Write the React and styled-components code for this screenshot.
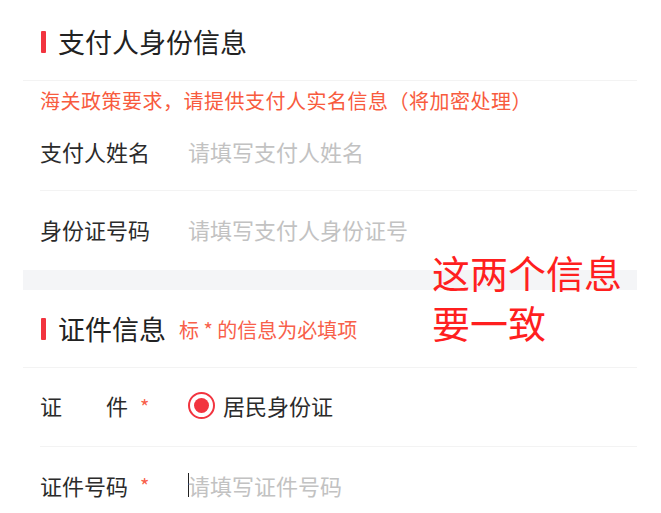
import React from 'react';
import styled, { createGlobalStyle } from 'styled-components';

const GlobalStyle = createGlobalStyle`
    html, body {
        margin:0;
        padding:0;
        background:#ffffff;
    }
    body {
        font-family:"Noto Sans CJK SC", "Noto Sans", sans-serif;
    }
`

const Page = styled.div`
    position:relative;
    width:614px;
    padding:3px 0 0 23px;
    background:#fff;
`

const SectionHeader = styled.div`
    height:77px;
    display:flex;
    align-items:center;
    padding-left:18px;
    border-bottom:1px solid #f3f3f3;
`

const Bar = styled.span`
    width:5px;
    height:22px;
    border-radius:1px;
    background:#f2343f;
    margin-right:12px;
`

const Title = styled.h2`
    margin:0;
    font-size:27px;
    font-weight:400;
    color:#222;
    line-height:1;
`

const Hint = styled.span`
    margin-left:13px;
    font-size:20px;
    color:#f8604a;
    line-height:1;
    margin-top:2px;
`

const Notice = styled.div`
    padding:6px 0 0 17px;
    height:28px;
    line-height:28px;
    font-size:20px;
    color:#f85b3e;
    letter-spacing:0.5px;
`

const Row = styled.div`
    box-sizing:border-box;
    margin-left:17px;
    height:${({tall}) => tall ? "76px" : "79px"};
    padding-bottom:4px;
    display:flex;
    align-items:center;
    border-bottom:${({last}) => last ? "none" : "1px solid #f3f3f3"};
`

const Label = styled.label`
    width:148px;
    flex-shrink:0;
    font-size:22px;
    color:#2b2b2b;
    white-space:pre;
    display:flex;
    align-items:center;
`

const Star = styled.span`
    color:#f8604a;
    font-size:20px;
    margin-left:12px;
    margin-top:2px;
`

const Input = styled.input`
    border:none;
    outline:none;
    padding:0;
    font-family:inherit;
    font-size:22px;
    color:#333;
    width:300px;
    background:transparent;
    caret-color:#222;
    &::placeholder {
        color:#c2c2c2;
    }
`

const Caret = styled.span`
    display:inline-block;
    width:1px;
    height:24px;
    background:#222;
    margin-right:-1px;
`

const RadioWrap = styled.div`
    display:flex;
    align-items:center;
    font-size:22px;
    color:#2b2b2b;
`

const Radio = styled.span`
    width:23px;
    height:23px;
    border-radius:50%;
    border:2px solid #f2343f;
    margin-right:8px;
    display:flex;
    align-items:center;
    justify-content:center;
    &::after {
        content:"";
        width:15px;
        height:15px;
        border-radius:50%;
        background:#f2343f;
    }
`

const Band = styled.div`
    height:20px;
    background:#f4f5f7;
`

const Note = styled.div`
    position:absolute;
    left:432px;
    top:247px;
    font-size:38px;
    line-height:50px;
    color:#ff1f1f;
`

const App = () => {
    return (
        <>
            <GlobalStyle />
            <Page>
                <SectionHeader>
                    <Bar />
                    <Title>支付人身份信息</Title>
                </SectionHeader>
                <Notice>海关政策要求，请提供支付人实名信息（将加密处理）</Notice>
                <Row tall>
                    <Label>支付人姓名</Label>
                    <Input placeholder="请填写支付人姓名" />
                </Row>
                <Row last>
                    <Label>身份证号码</Label>
                    <Input placeholder="请填写支付人身份证号" />
                </Row>
                <Band />
                <SectionHeader>
                    <Bar />
                    <Title>证件信息</Title>
                    <Hint>标 * 的信息为必填项</Hint>
                </SectionHeader>
                <Row>
                    <Label>证{"\u3000\u3000"}件<Star>*</Star></Label>
                    <RadioWrap>
                        <Radio />
                        居民身份证
                    </RadioWrap>
                </Row>
                <Row last>
                    <Label>证件号码<Star>*</Star></Label>
                    <Caret />
                    <Input placeholder="请填写证件号码" />
                </Row>
                <Note>这两个信息<br />要一致</Note>
            </Page>
        </>
    )
}

export default App
